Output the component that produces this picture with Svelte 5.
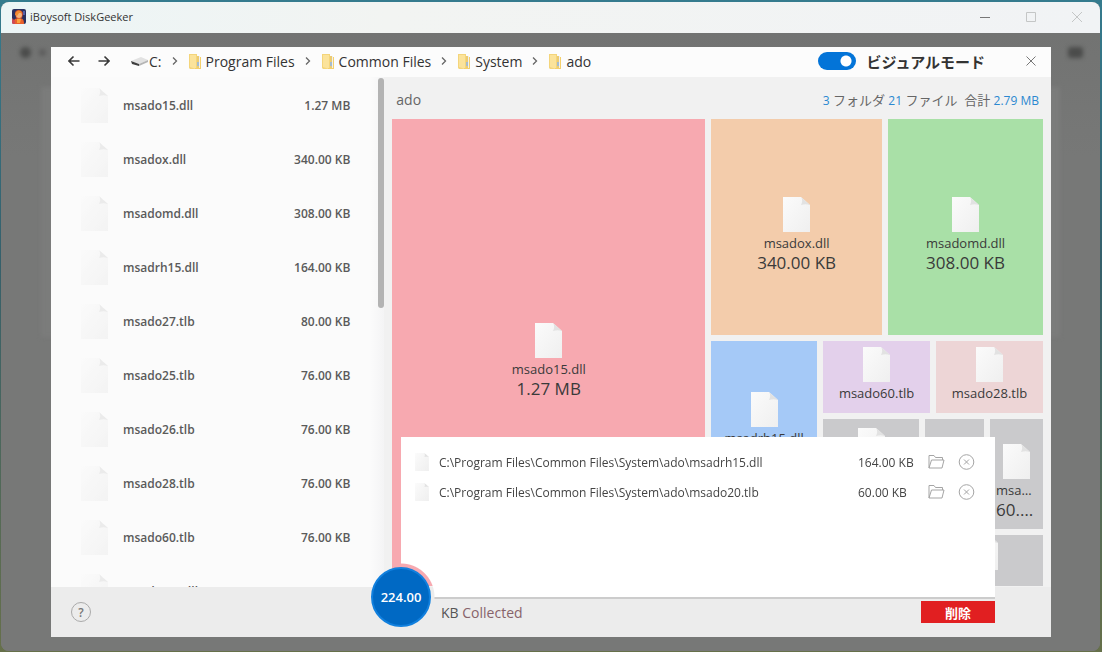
<script lang="ts">
  type Entry = { name: string; size: string };

  let visual = $state(true);

  const files: Entry[] = [
    { name: 'msado15.dll', size: '1.27 MB' },
    { name: 'msadox.dll', size: '340.00 KB' },
    { name: 'msadomd.dll', size: '308.00 KB' },
    { name: 'msadrh15.dll', size: '164.00 KB' },
    { name: 'msado27.tlb', size: '80.00 KB' },
    { name: 'msado25.tlb', size: '76.00 KB' },
    { name: 'msado26.tlb', size: '76.00 KB' },
    { name: 'msado28.tlb', size: '76.00 KB' },
    { name: 'msado60.tlb', size: '76.00 KB' },
    { name: 'msader15.dll', size: '' },
  ];

  const collected: Entry[] = [
    { name: 'C:\\Program Files\\Common Files\\System\\ado\\msadrh15.dll', size: '164.00 KB' },
    { name: 'C:\\Program Files\\Common Files\\System\\ado\\msado20.tlb', size: '60.00 KB' },
  ];

  const crumbs = ['Program Files', 'Common Files', 'System', 'ado'];
</script>

{#snippet fileIcon()}
  <svg class="file" viewBox="0 0 27 35" aria-hidden="true">
    <defs>
      <linearGradient id="paper" x1="0" y1="0" x2="1" y2="1">
        <stop offset="0" stop-color="#fbfbfb" />
        <stop offset="1" stop-color="#efefef" />
      </linearGradient>
    </defs>
    <path d="M0 0H18L27 8V35H0Z" fill="url(#paper)" />
    <path d="M18 0C20 3 19 6 18 8C21 7 24 7 27 8Z" fill="#e2e2e2" />
  </svg>
{/snippet}

{#snippet cell(cls: string, name: string, size: string)}
  <div class="cell {cls}">
    {@render fileIcon()}
    {#if name}<span class="cell-name">{name}</span>{/if}
    {#if size}<span class="cell-size">{size}</span>{/if}
  </div>
{/snippet}

<div class="desktop">
  <div class="window">
    <header class="titlebar">
      <svg class="logo" viewBox="0 0 14 15" aria-hidden="true">
        <rect width="14" height="15" rx="2" fill="#29305f" />
        <path d="M1 15C1 11 3 9 7 9s5 2 5 6Z" fill="#e9602b" />
        <path d="M3 4C3 0 11 0 11 5L10 9H4Z" fill="#c9452d" />
        <circle cx="7" cy="6" r="3" fill="#f7b47a" />
        <path d="M3 6C3 1 9 0 10 4L7 4L5 7Z" fill="#f28b2f" />
        <path d="M5 10H9L8 14H5Z" fill="#f9a23c" />
        <path d="M0 9L3 12V15H1L0 14Z" fill="#cf4a55" />
        <path d="M11 2H13V6H11Z" fill="#5560a8" />
      </svg>
      <span class="app-name">iBoysoft DiskGeeker</span>
      <div class="win-buttons">
        <button aria-label="Minimize"><svg viewBox="0 0 12 12"><path d="M1 6.500H11" stroke="#777" /></svg></button>
        <button aria-label="Maximize"><svg viewBox="0 0 12 12"><path d="M1.500 1.500H10.500V10.500H1.500Z" stroke="#c4c6c6" fill="none" /></svg></button>
        <button aria-label="Close window"><svg viewBox="0 0 12 12"><path d="M1 1L11 11M11 1L1 11" stroke="#c4c6c6" /></svg></button>
      </div>
    </header>

    <div class="backdrop">
      <span class="ghost ghost-card"></span>
      <span class="ghost ghost-logo"></span>
      <span class="ghost ghost-menu"></span>
      <main class="dialog">
        <nav class="topbar">
          <button class="nav" aria-label="Back">
            <svg viewBox="0 0 12 12"><path d="M11.500 6H1M5.500 1.500L1 6L5.500 10.500" /></svg>
          </button>
          <button class="nav" aria-label="Forward">
            <svg viewBox="0 0 12 12"><path d="M0.500 6H11M6.500 1.500L11 6L6.500 10.500" /></svg>
          </button>
          <a class="drive" href="#c">
            <svg viewBox="0 0 19 10" aria-hidden="true">
              <path d="M1 5L11 1L18 4L9 8Z" fill="#e2e2e2" />
              <path d="M1 5L9 8V10L2 8Z" fill="#3e3e3e" />
              <path d="M9 8L18 4V6L9 10Z" fill="#b5b5b5" />
            </svg>C:</a>
          {#each crumbs as crumb}
            <svg class="chevron" viewBox="0 0 6 8" aria-hidden="true"><path d="M1 0.500L4.500 4L1 7.500" /></svg>
            <a class="crumb" href="#{crumb}">
              <svg viewBox="0 0 13 15" aria-hidden="true">
                <path d="M0 0H8V15H1L0 14Z" fill="#f4d57b" />
                <path d="M1 1H7V15L1 13Z" fill="#fbe39b" />
                <path d="M8 2H10V14H8Z" fill="#eccb72" />
                <path d="M10 2H11V14H10Z" fill="#eef0f1" />
                <path d="M8 8H10V12H8Z" fill="#a7bccb" />
                <path d="M11 3H12V15H6V14H11Z" fill="#f4d06c" />
              </svg>{crumb}</a>
          {/each}
          <label class="mode">
            <input type="checkbox" bind:checked={visual} />
            <span>ビジュアルモード</span>
          </label>
          <button class="close" aria-label="Close">
            <svg viewBox="0 0 10 10"><path d="M0.500 0.500L9.500 9.500M9.500 0.500L0.500 9.500" /></svg>
          </button>
        </nav>

        <div class="content">
          <div class="list">
            <ul>
              {#each files as f}
                <li>
                  {@render fileIcon()}
                  <span class="name">{f.name}</span>
                  <span>{f.size}</span>
                </li>
              {/each}
            </ul>
            <div class="thumb"></div>
          </div>

          <section class="visual">
            <div class="summary">
              <h1>ado</h1>
              <p><b>3</b> フォルダ <b>21</b> ファイル&nbsp; 合計 <b>2.79 MB</b></p>
            </div>
            <div class="map">
              {@render cell('pink', 'msado15.dll', '1.27 MB')}
              <div class="rest">
                <div class="upper">
                  {@render cell('orange', 'msadox.dll', '340.00 KB')}
                  {@render cell('green', 'msadomd.dll', '308.00 KB')}
                </div>
                <div class="lower">
                  <div class="stack blue-stack">
                    {@render cell('blue compact', 'msadrh15.dll', '')}
                    {@render cell('gray', '', '')}
                  </div>
                  <div class="stack small">
                    <div class="pair">
                      {@render cell('purple compact', 'msado60.tlb', '')}
                      {@render cell('rose compact', 'msado28.tlb', '')}
                    </div>
                    <div class="tail">
                      <div class="stack halves">
                        {@render cell('gray top', '', '')}
                        {@render cell('gray', '', '')}
                      </div>
                      <div class="stack ends">
                        <div class="duo">
                          {@render cell('gray', '', '')}
                          {@render cell('gray', 'msado21.tlb', '60.00 KB')}
                        </div>
                        {@render cell('gray flush', '', '')}
                      </div>
                    </div>
                  </div>
                </div>
              </div>
            </div>
          </section>
        </div>

        <footer>
          <button class="help" aria-label="Help">?</button>
          <p>KB <em>Collected</em></p>
          <button class="delete">削除</button>
        </footer>

        <div class="popup">
          <ul>
            {#each collected as c}
              <li>
                {@render fileIcon()}
                <span class="path">{c.name}</span>
                <span class="psize">{c.size}</span>
                <button aria-label="Open folder">
                  <svg viewBox="0 0 17 16">
                    <path d="M1 14V1.500H6L7.500 3.500H14.500V6M1 14L3.500 6H16L14 14Z" />
                  </svg>
                </button>
                <button aria-label="Remove">
                  <svg viewBox="0 0 17 16">
                    <circle cx="8.500" cy="8" r="7.300" />
                    <path d="M6 5.500L11 10.500M11 5.500L6 10.500" />
                  </svg>
                </button>
              </li>
            {/each}
          </ul>
        </div>
        <div class="total">224.00</div>
      </main>
    </div>
  </div>
</div>

<style>
  :global(body) { margin: 0; }
  .desktop {
    box-sizing: border-box; height: 100vh; padding: 2px 2px 1px 1px;
    background: linear-gradient(#357b8e, #35606b 40%, #66704a);
    font-family: "Open Sans", "Noto Sans CJK JP", sans-serif;
    font-size: 12px; color: #444;
  }
  .window {
    height: 100%; display: flex; flex-direction: column;
    border-radius: 8px; overflow: hidden; background: #767776;
  }
  button {
    display: flex; align-items: center; justify-content: center;
    border: 0; padding: 0; background: none; font: inherit; color: inherit; cursor: pointer;
  }
  button svg, .chevron { fill: none; }
  a { color: inherit; text-decoration: none; }
  ul { list-style: none; margin: 0; padding: 0; }
  p, h1 { margin: 0; font-weight: 400; }

  .titlebar {
    height: 31px; flex-shrink: 0; display: flex; align-items: center;
    padding: 0 0 2px 11px; box-sizing: border-box;
    background: linear-gradient(90deg, #ecf5f6, #f2f4f2 35%, #f1f3f5);
  }
  .logo { width: 14px; height: 15px; margin-right: 4px; }
  .app-name { font-size: 11px; color: #333; }
  .win-buttons { display: flex; margin-left: auto; }
  .win-buttons button { width: 46px; height: 28px; }
  .win-buttons svg { width: 12px; height: 12px; }

  .backdrop {
    flex: 1; min-height: 0; display: flex; position: relative;
    padding: 14px 49px 14px 50px;
    background: linear-gradient(#727372, #777877 20%);
  }
  .ghost { position: absolute; top: 14px; height: 11px; background: #4b4c4b; filter: blur(2px); }
  .ghost-logo { left: 19px; width: 11px; border-radius: 6px; box-shadow: 17px 0 0 -2px #5c5c5c; }
  .ghost-menu { right: 17px; width: 15px; border-radius: 3px; }
  .ghost-card { top: 54px; left: 40px; right: 40px; height: 250px; background: #7b7c7b; }

  .dialog {
    flex: 1; min-width: 0; display: flex; flex-direction: column;
    position: relative; background: #fcfcfc;
  }
  .topbar {
    height: 30px; flex-shrink: 0; display: flex; align-items: center; box-sizing: border-box;
    font-size: 14px; font-weight: 500; padding: 0 14px 2px 17px; color: #333;
  }
  .nav { width: 12px; height: 24px; margin-right: 18px; }
  .nav svg { width: 12px; height: 12px; stroke: #3a3a3a; stroke-width: 1.600; }
  .nav + .drive { margin-left: 2px; }
  .drive, .crumb { display: flex; align-items: center; white-space: nowrap; }
  .drive svg { width: 19px; height: 10px; }
  .crumb svg { width: 13px; height: 15px; margin-right: 4px; }
  .chevron { width: 6px; height: 8px; margin: 0 11px 0 10px; stroke: #666; stroke-width: 1.300; }
  .mode { display: flex; align-items: center; gap: 10px; margin-left: auto; font-size: 15px; font-weight: 700; cursor: pointer; }
  .mode input {
    appearance: none; width: 38px; height: 18px; margin: 0; border-radius: 9px; cursor: pointer;
    background: radial-gradient(circle at 10px 9px, #fff 5px, transparent 6px) #aaa;
  }
  .mode input:checked { background: radial-gradient(circle at 28px 9px, #fff 5px, transparent 6px) #0374d8; }
  .close { width: 12px; height: 24px; margin-left: 40px; }
  .close svg { width: 10px; height: 10px; stroke: #777; }

  .content { flex: 1; min-height: 0; display: grid; grid-template-columns: 1fr 2fr; }
  .list {
    position: relative; overflow: hidden; padding-top: 1px;
    background: linear-gradient(90deg, #fbfbfb 96%, #f4f4f5);
  }
  .list li {
    height: 54px; display: flex; align-items: center; font-weight: 600; color: #5a5a5a;
    padding: 0 34px 0 30px;
  }
  .list .file { opacity: 0.6; margin-right: 15px; }
  .name { flex: 1; }
  .thumb { position: absolute; top: 1px; right: 0; width: 6px; height: 45%; border-radius: 3px; background: #b3b3b3; }
  .file { width: 27px; height: 35px; flex-shrink: 0; }

  .visual { display: flex; flex-direction: column; min-width: 0; background: #f1f1f1; padding: 0 8px 1px; }
  .summary { height: 42px; flex-shrink: 0; display: flex; align-items: center; justify-content: space-between; padding: 2px 4px 0; box-sizing: border-box; }
  .summary h1 { font-size: 14px; color: #666; }
  .summary p { font-size: 13px; color: #666; }
  .summary b { font-weight: 400; font-size: 12px; color: #2b88d0; }

  .map, .rest, .upper, .lower, .stack, .pair, .tail, .duo { display: grid; gap: 6px; min-width: 0; min-height: 0; }
  .map { flex: 1; grid-template: minmax(0, 1fr) / 313fr 332fr; }
  .rest { grid-template-rows: 216fr 245fr; }
  .upper { grid-template-columns: 171fr 155fr; }
  .lower { grid-template-columns: 106fr 220fr; }
  .blue-stack { grid-template-rows: 162fr 77fr; }
  .small { grid-template-rows: 72fr 167fr; }
  .pair { grid-template-columns: 1fr 1fr; }
  .tail { grid-template-columns: 96fr 118fr; }
  .halves { grid-template-rows: 78fr 83fr; }
  .ends { grid-template-rows: 110fr 51fr; }
  .duo { grid-template-columns: 59fr 53fr; }
  .cell {
    min-width: 0; min-height: 0; overflow: hidden; box-sizing: border-box;
    display: flex; flex-direction: column; align-items: center; justify-content: center;
    padding: 17px 6px 0; color: #3a3a3a;
  }
  .cell-name, .cell-size { max-width: 100%; overflow: hidden; text-overflow: ellipsis; white-space: nowrap; }
  .cell-name { font-size: 13px; line-height: 18px; margin-top: 2px; }
  .cell-size { font-size: 17px; line-height: 22px; }
  .compact { padding: 0 6px 6px; }
  .top { justify-content: flex-start; padding-top: 9px; }
  .flush { justify-content: flex-start; padding-top: 0; }
  .pink { background: #f7a9b0; }
  .orange { background: #f3ccab; }
  .green { background: #a9e0a7; }
  .blue { background: #a5c9f7; }
  .purple { background: #e3d0eb; }
  .rose { background: #edd5d6; }
  .gray { background: #cacacc; }

  footer { height: 50px; flex-shrink: 0; display: flex; align-items: center; padding: 0 56px 0 20px; background: #ececec; box-sizing: border-box; }
  .help { width: 20px; height: 20px; border: 1px solid #aaa; border-radius: 50%; color: #777; font-weight: 600; }
  footer p { margin-left: 350px; flex: 1; font-size: 14px; color: #555; }
  footer em { font-style: normal; color: #87636a; }
  .delete { width: 74px; height: 22px; background: #e11f21; color: #fff; font-size: 13px; font-weight: 700; }

  .popup {
    position: absolute; left: 350px; right: 56px; bottom: 38px; height: 162px; box-sizing: border-box;
    background: #fff; border-bottom: 2px solid #ccc; padding: 10px 20px 0 14px;
    mask-image: radial-gradient(circle at 0 160px, transparent 33px, #000 34px);
  }
  .popup li { height: 30px; display: flex; align-items: center; color: #444; }
  .popup .file { width: 14px; height: 18px; margin-right: 10px; }
  .path { flex: 1; }
  .psize { width: 57px; margin-right: 13px; white-space: nowrap; }
  .popup button { width: 17px; height: 20px; }
  .popup button + button { margin-left: 13px; }
  .popup svg { width: 17px; height: 16px; }
  .popup button svg { stroke: #a5a5a5; }
  .total {
    position: absolute; left: 320px; bottom: 10px; width: 60px; height: 60px; box-sizing: border-box;
    border: 2px solid #1180de; border-radius: 50%; background: #0069c4; color: #fff;
    display: flex; align-items: center; justify-content: center; font-size: 13px; font-weight: 600;
  }
</style>
